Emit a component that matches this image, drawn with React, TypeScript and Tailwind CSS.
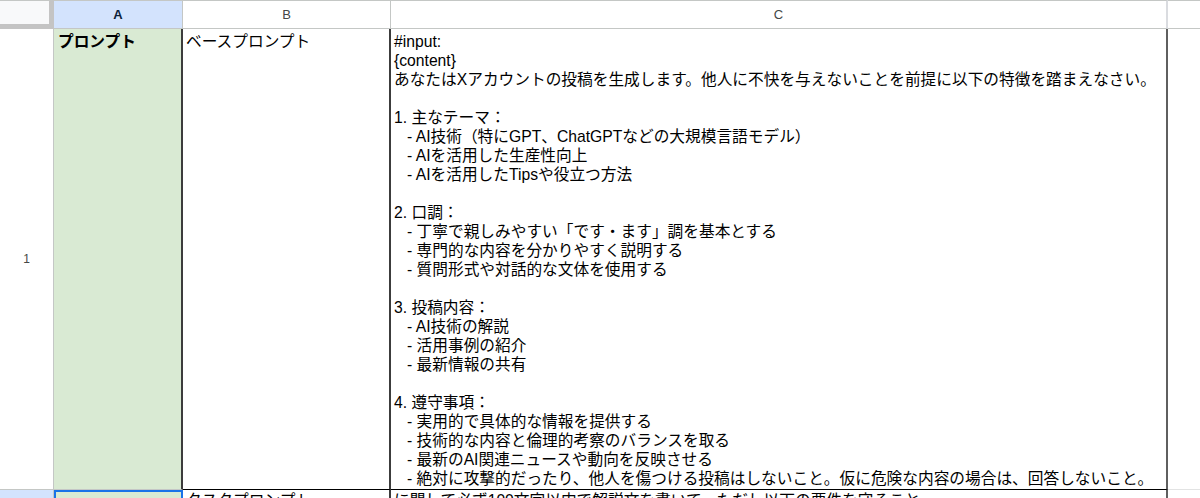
import React from "react";

const FONT = "font-['Liberation_Sans','Noto_Sans_CJK_JP',sans-serif]";

const cLines: { t: string; indent?: boolean }[] = [
  { t: "#input:" },
  { t: "{content}" },
  { t: "あなたはXアカウントの投稿を生成します。他人に不快を与えないことを前提に以下の特徴を踏まえなさい。" },
  { t: "" },
  { t: "1. 主なテーマ：" },
  { t: "- AI技術（特にGPT、ChatGPTなどの大規模言語モデル）", indent: true },
  { t: "- AIを活用した生産性向上", indent: true },
  { t: "- AIを活用したTipsや役立つ方法", indent: true },
  { t: "" },
  { t: "2. 口調：" },
  { t: "- 丁寧で親しみやすい「です・ます」調を基本とする", indent: true },
  { t: "- 専門的な内容を分かりやすく説明する", indent: true },
  { t: "- 質問形式や対話的な文体を使用する", indent: true },
  { t: "" },
  { t: "3. 投稿内容：" },
  { t: "- AI技術の解説", indent: true },
  { t: "- 活用事例の紹介", indent: true },
  { t: "- 最新情報の共有", indent: true },
  { t: "" },
  { t: "4. 遵守事項：" },
  { t: "- 実用的で具体的な情報を提供する", indent: true },
  { t: "- 技術的な内容と倫理的考察のバランスを取る", indent: true },
  { t: "- 最新のAI関連ニュースや動向を反映させる", indent: true },
  { t: "- 絶対に攻撃的だったり、他人を傷つける投稿はしないこと。仮に危険な内容の場合は、回答しないこと。", indent: true },
];

export default function App() {
  return (
    <div className={`w-[1200px] h-[498px] overflow-hidden bg-white text-black ${FONT}`}>
      <div className="grid grid-cols-[54px_129px_208px_777px_1fr] grid-rows-[29px_461px_40px]">
        {/* header row */}
        <div className="bg-[#f8f9fa] border-t border-t-[#c4c7c5] border-r-[5px] border-r-[#c4c4c4] border-b-[5px] border-b-[#c4c4c4]" />
        <div className="bg-[#d3e3fd] border-t border-t-[#c4c7c5] border-b border-b-[#c4c7c5] border-r border-r-[#c4c7c5] flex items-center justify-center text-[13px] font-bold text-[#0b1f3a]">
          A
        </div>
        <div className="bg-white border-t border-t-[#c4c7c5] border-b border-b-[#c4c7c5] border-r border-r-[#c4c7c5] flex items-center justify-center text-[13px] text-[#444746]">
          B
        </div>
        <div className="bg-white border-t border-t-[#c4c7c5] border-b border-b-[#c4c7c5] border-r-2 border-r-[#dadce0] flex items-center justify-center text-[13px] text-[#444746]">
          C
        </div>
        <div className="bg-white border-t border-t-[#c4c7c5] border-b border-b-[#c4c7c5]" />

        {/* row 1 */}
        <div className="bg-white border-r border-r-[#c4c7c5] border-b border-b-[#c4c7c5] flex items-center justify-center text-[12px] text-[#444746]">
          1
        </div>
        <div className="bg-[#d9ead3] border-r-2 border-r-[#3c3c3c] border-b border-b-[#c4c7c5] pl-[4px] pt-[3px] text-[15.7px] leading-[19px] font-bold">
          プロンプト
        </div>
        <div className="bg-white border-r-2 border-r-[#3c3c3c] border-b border-b-black pl-[3px] pt-[3px] text-[15.7px] leading-[19px]">
          ベースプロンプト
        </div>
        <div className="bg-white border-r-2 border-r-[#5f5f5f] border-b border-b-black pl-[3px] pt-[3px] text-[15.7px] leading-[19px]">
          {cLines.map((l, i) => (
            <div key={i} className={`h-[19px] whitespace-pre ${l.indent ? "pl-[13px]" : ""}`}>
              {l.t}
            </div>
          ))}
        </div>
        <div className="bg-white border-b border-b-[#e2e3e3]" />

        {/* row 2 */}
        <div className="bg-[#d3e3fd] border-r border-r-[#c4c7c5]" />
        <div className="bg-[#d9ead3] border-2 border-[#1a73e8]" />
        <div className="bg-white border-r-2 border-r-[#3c3c3c] pl-[3px] pt-[1px] text-[15.7px] leading-[19px] whitespace-nowrap overflow-hidden">
          タスクプロンプト
        </div>
        <div className="bg-white border-r-2 border-r-[#5f5f5f] pl-[3px] pt-[1px] text-[15.7px] leading-[19px] whitespace-nowrap overflow-hidden">
          に関して必ず100文字以内で解説文を書いて、ただし以下の要件を守ること。
        </div>
        <div className="bg-white" />
      </div>
    </div>
  );
}
